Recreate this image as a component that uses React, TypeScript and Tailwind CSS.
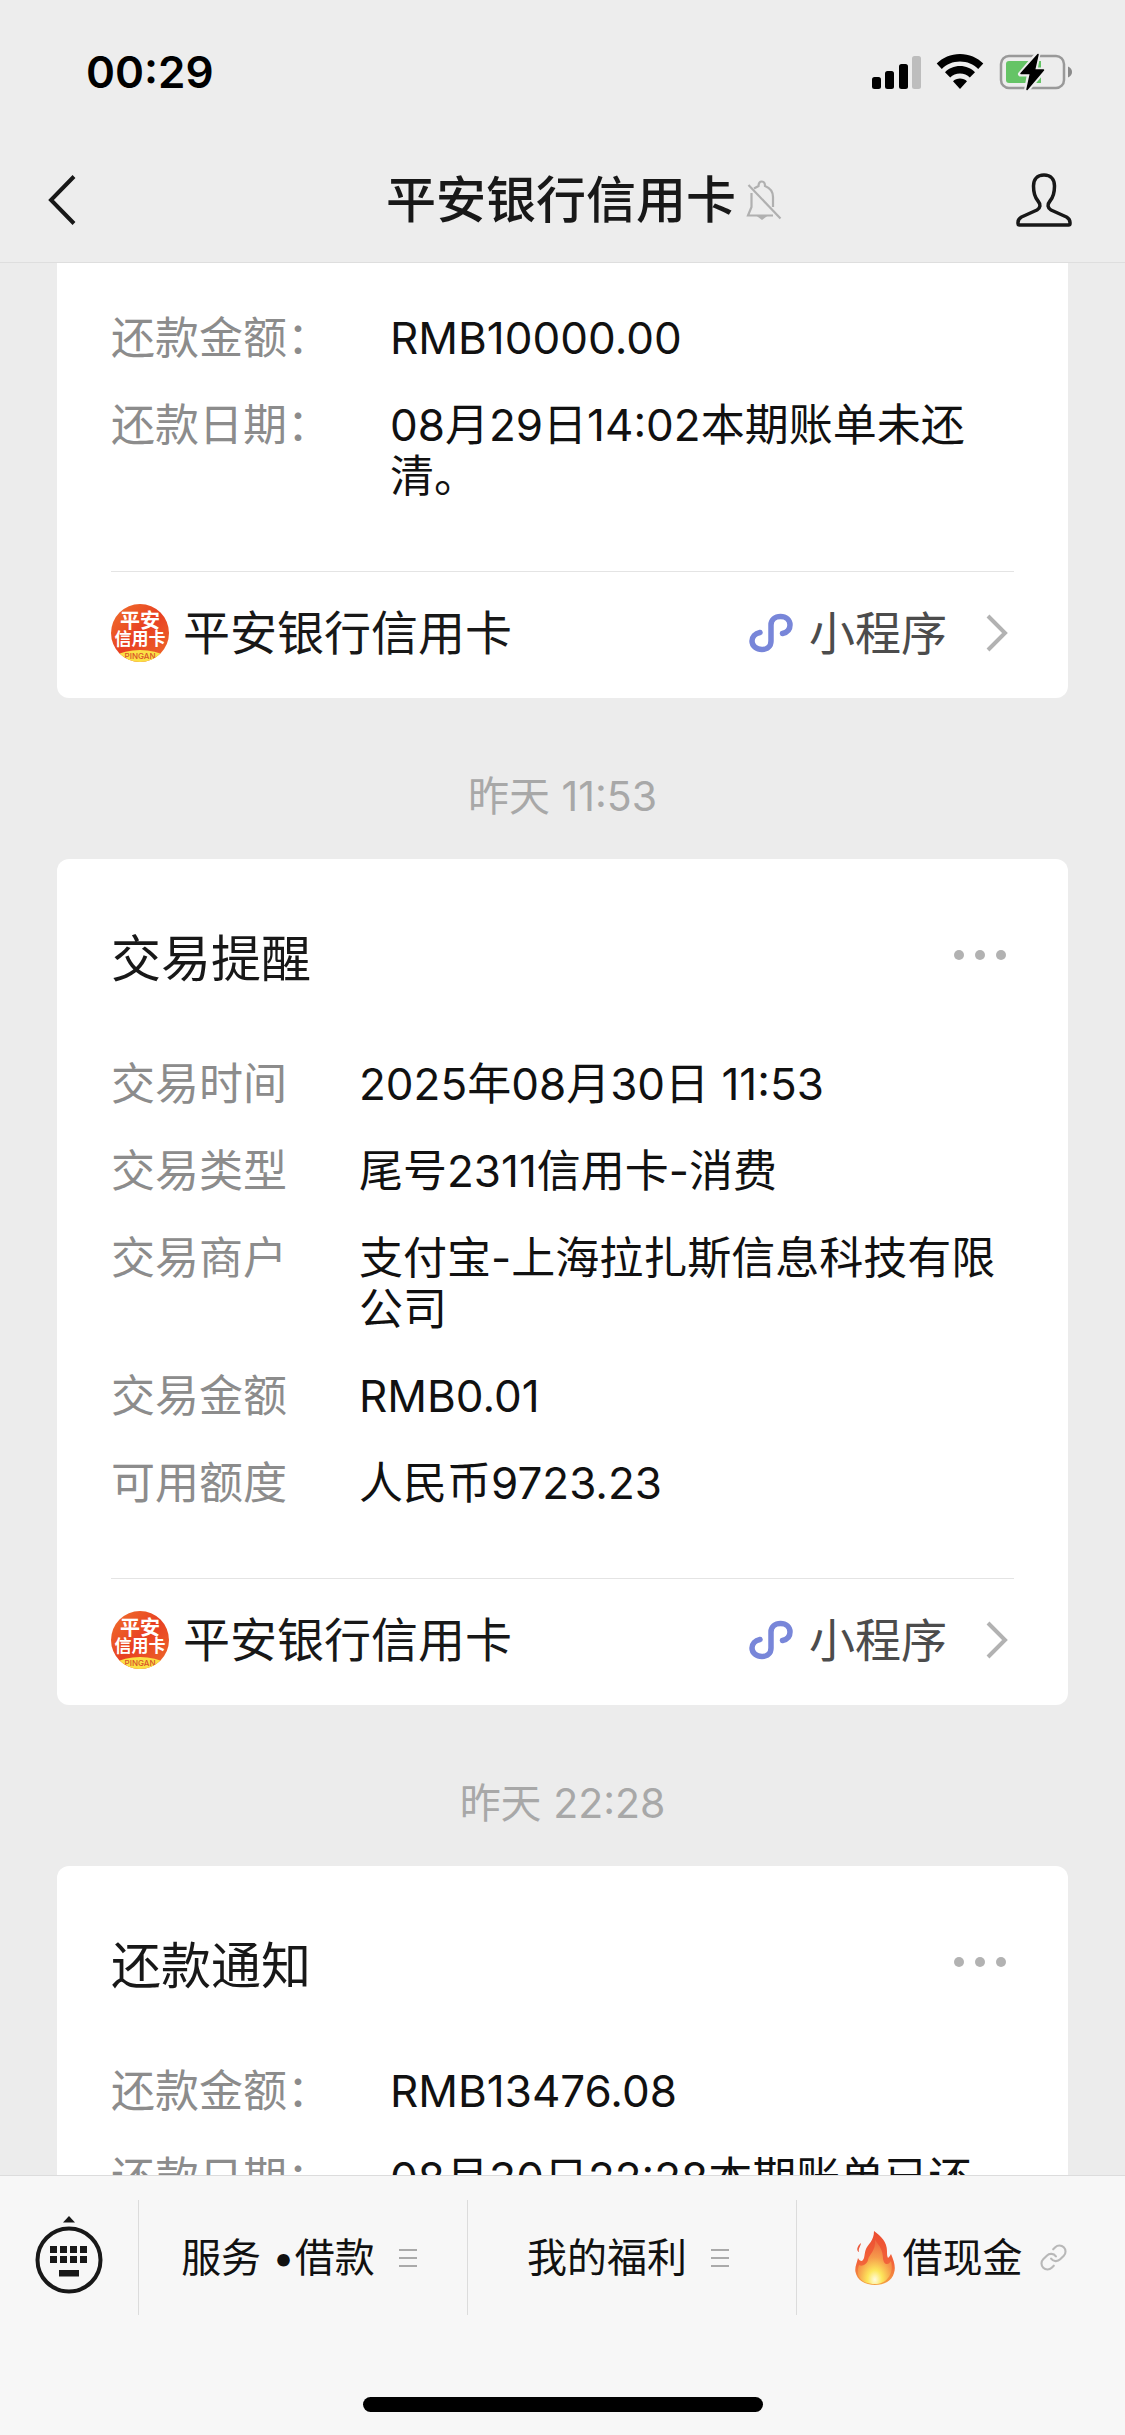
import type {ReactNode} from "react";
import {Link} from "lucide-react";

type Row = { label: string; value: string };

type Notice = {
    title?: string;
    rows: Row[];
    labelWidth: string;
    footer?: boolean;
    className?: string;
};

const repayment: Row[] = [
    {label: "还款金额：", value: "RMB10000.00"},
    {label: "还款日期：", value: "08月29日14:02本期账单未还清。"},
];

const transaction: Row[] = [
    {label: "交易时间", value: "2025年08月30日 11:53"},
    {label: "交易类型", value: "尾号2311信用卡-消费"},
    {label: "交易商户", value: "支付宝-上海拉扎斯信息科技有限公司"},
    {label: "交易金额", value: "RMB0.01"},
    {label: "可用额度", value: "人民币9723.23"},
];

const settled: Row[] = [
    {label: "还款金额：", value: "RMB13476.08"},
    {label: "还款日期：", value: "08月30日22:28本期账单已还"},
];

const SignalIcon = () => (
    <svg width="50" height="36" viewBox="0 0 50 36" aria-hidden="true">
        <rect x="1" y="23" width="9" height="12" rx="2.5"/>
        <rect x="14" y="17" width="9" height="18" rx="2.5"/>
        <rect x="28" y="10" width="9" height="25" rx="2.5"/>
        <rect x="41" y="2" width="9" height="33" rx="2.5" fill="#bdbdbd"/>
    </svg>
);

const WifiIcon = () => (
    <svg width="48" height="36" viewBox="0 0 48 36" aria-hidden="true">
        <path d="M24 0C33.200 0 41.400 3.600 47.300 9.600L42.200 15C37.500 10.300 31.100 7.600 24 7.600C16.900 7.600 10.500 10.300 5.800 15L0.700 9.600C6.600 3.600 14.800 0 24 0Z"/>
        <path d="M24 12C29.900 12 35.200 14.300 39 18.200L33.800 23.400C31.300 20.900 27.900 19.400 24 19.400C20.100 19.400 16.700 20.900 14.200 23.400L9 18.200C12.800 14.300 18.100 12 24 12Z"/>
        <path d="M24 24.500C26.800 24.500 29.200 25.500 31 27.300L24 35L17 27.300C18.800 25.500 21.200 24.500 24 24.500Z"/>
    </svg>
);

const BatteryIcon = () => (
    <svg width="74" height="38" viewBox="0 0 74 38" aria-hidden="true">
        <rect x="2" y="3" width="63" height="32" rx="8" fill="none" stroke="#999" strokeWidth="2.500"/>
        <path d="M69 13.500C71.600 14.500 73 16.500 73 19C73 21.500 71.600 23.500 69 24.500Z" fill="#8a8a8a"/>
        <path d="M10 8H42V30H10Q7 30 7 27V11Q7 8 10 8Z" fill="#65c466"/>
        <path d="M39 0.500L21.500 21H30.500L27.500 37.500L45 17H36Z" stroke="#ededed" strokeWidth="5" strokeLinejoin="round"/>
        <path d="M39 1.500L22 20.500H31.500L28 36.500L44.500 17H35.500Z" stroke="#000" strokeWidth="1.500" strokeLinejoin="round"/>
    </svg>
);

const MutedIcon = () => (
    <svg width="36" height="42" viewBox="0 0 36 42" fill="none" stroke="#b0b0b0" strokeWidth="2.200" aria-hidden="true">
        <path d="M5.500 14V28L2 36.500H27"/>
        <path d="M8 9.500L12.500 7C12.500 1 19 1 19 7C24 9 27 12.500 27 18V28"/>
        <path d="M2.500 6L34.500 39.500"/>
        <path d="M14 38H18L16 39.500Z"/>
    </svg>
);

const PersonIcon = () => (
    <svg width="56" height="54" viewBox="0 0 56 54" fill="none" stroke="#181818" strokeWidth="3.500" strokeLinejoin="round" aria-hidden="true">
        <path d="M28 2C21 2 17.500 6.500 17.500 13C17.500 20.500 18.500 24 22 28C25 31.500 24.500 35 21 37L5.500 44Q2 46 2 49.500V50.500Q2 52 3.500 52H52.500Q54 52 54 50.500V49.500Q54 46 50.500 44L35 37C31.500 35 31 31.500 34 28C37.500 24 38.500 20.500 38.500 13C38.500 6.500 35 2 28 2Z"/>
    </svg>
);

const MiniProgramIcon = () => (
    <svg width="44" height="40" viewBox="0 0 44 40" fill="none" stroke="#7886d9" strokeWidth="5.500" strokeLinecap="round" aria-hidden="true">
        <path d="M33.500 20.500C38 19.500 41 16.500 41 12C41 7 37 3.500 31.500 3.500C26 3.500 22 7 22 12V28C22 33 18.500 36.500 13 36.500C7.500 36.500 3 33 3 28C3 24 6 20.500 11 19.500"/>
    </svg>
);

const KeyboardIcon = () => (
    <svg width="68" height="80" viewBox="0 0 68 80" fill="#181818" aria-hidden="true">
        <path d="M34 0L40 6.500H28Z"/>
        <circle cx="34" cy="44" r="31.500" fill="none" stroke="#181818" strokeWidth="4"/>
        {[15, 25, 35, 45].map((x) => (
            <g key={x}>
                <rect x={x} y="30" width="7" height="7"/>
                <rect x={x} y="40" width="7" height="7"/>
            </g>
        ))}
        <rect x="24" y="54" width="20" height="6.500"/>
    </svg>
);

const MenuLinesIcon = () => (
    <svg className="mr-2" width="18" height="20" viewBox="0 0 18 20" stroke="#aaa" strokeWidth="2" aria-hidden="true">
        <path d="M0 2H18M0 10H18M0 18H18"/>
    </svg>
);

const FireIcon = () => (
    <svg width="40" height="54" viewBox="0 0 40 54" aria-hidden="true">
        <defs>
            <linearGradient id="flame" x1="0" y1="0" x2="0" y2="1">
                <stop offset="0" stopColor="#ec4c30"/>
                <stop offset="0.600" stopColor="#f2643a"/>
                <stop offset="1" stopColor="#f4a341"/>
            </linearGradient>
            <radialGradient id="glow" cx="0.500" cy="0.900" r="0.850">
                <stop offset="0" stopColor="#fffbe0"/>
                <stop offset="0.250" stopColor="#fde75c"/>
                <stop offset="0.600" stopColor="#f69a4b"/>
                <stop offset="1" stopColor="#ee6a40"/>
            </radialGradient>
        </defs>
        <path d="M19 0C26 5 32 11 32 20C32 23 32 25 33 27C34 26 35 25 36 23C39 30 41 36 39 42C37 50 29 54 20 54C10 54 2 49 0.500 41C-0.500 36 2 32 3 27C4 29 5 30 7 30C10 28 9 23 11 18C13 13 19 10 19 0Z" fill="url(#flame)"/>
        <path d="M6 12C6 15 3 17 4 21C1 20 2 15 6 12Z" fill="#ec5a3c"/>
        <path d="M20 9C25 15 28 20 28 28C29 32 30 33 32 33C34 33 35 31 36 30C38 37 36 44 33 47C30 51 25 53 20 53C13 53 7 51 4 46C2 42 3 37 4 34C7 36 12 33 13 29C14 23 21 20 20 9Z" fill="url(#glow)"/>
    </svg>
);

const BrandLogo = () => (
    <span className="relative flex size-[58px] shrink-0 flex-col items-center overflow-hidden rounded-full bg-linear-to-br from-[#f0702c] via-[#e83f22] to-[#ee6a2a] pt-2 font-bold text-white">
        <span className="text-[20px] leading-[18px]">平安</span>
        <span className="text-[17px] leading-[18px]">信用卡</span>
        <span className="absolute -bottom-8 left-1/2 h-[44px] w-[76px] -translate-x-1/2 rounded-[50%] bg-[#fbe045] text-center text-[8px] leading-[12px] font-medium text-[#d8522a]">PINGAN</span>
    </span>
);

const CardFooter = () => (
    <a href="#" className="flex h-[127px] items-center border-t border-[#e4e4e4] pb-1 text-[47px] leading-[60px]">
        <BrandLogo/>
        <span className="ml-[14px] flex-1 text-[#181818]">平安银行信用卡</span>
        <MiniProgramIcon/>
        <span className="ml-4 text-[46px] text-[#4c4c4c]">小程序</span>
        <svg className="mr-[5px] ml-[38px]" width="24" height="38" viewBox="0 0 24 38" fill="none" stroke="#b2b2b2" strokeWidth="4" aria-hidden="true">
            <path d="M3 2L20 19L3 36"/>
        </svg>
    </a>
);

const NoticeCard = ({title, rows, labelWidth, footer = true, className = "rounded-xl pt-[70px]"}: Notice) => (
    <section className={`mx-[57px] bg-white px-[54px] ${className}`}>
        {title && (
            <div className="mb-[70px] flex items-center justify-between">
                <h2 className="text-[50px] leading-[60px] text-[#181818]">{title}</h2>
                <button type="button" aria-label="更多" className="mr-2 mb-2 flex gap-[11px]">
                    <span className="size-[10px] rounded-full bg-[#b2b2b2]"/>
                    <span className="size-[10px] rounded-full bg-[#b2b2b2]"/>
                    <span className="size-[10px] rounded-full bg-[#b2b2b2]"/>
                </button>
            </div>
        )}
        <dl className="flex flex-col gap-[36px] pb-[69px] text-[44px] leading-[51px]">
            {rows.map((row) => (
                <div key={row.label} className="flex">
                    <dt className={`shrink-0 text-[#8c8c8c] ${labelWidth}`}>{row.label}</dt>
                    <dd className="text-[#111]">{row.value}</dd>
                </div>
            ))}
        </dl>
        {footer && <CardFooter/>}
    </section>
);

const TimeStamp = ({children}: { children: ReactNode }) => (
    <p className="pt-[72px] pb-[37px] text-center text-[41px] leading-[52px] text-[#a8a8a8]">{children}</p>
);

const MenuButton = ({children}: { children: ReactNode }) => (
    <button type="button" className="flex flex-1 items-center justify-center border-l border-[#dcdcdc] text-[40px] leading-[52px] text-[#111]">
        {children}
    </button>
);

const App = () => {
    return (
        <div lang="zh-CN" className="flex h-screen flex-col overflow-hidden bg-[#ececec] font-['Inter','Noto_Sans_CJK_SC',sans-serif]">
            <header className="shrink-0 border-b border-[#dedede] bg-[#ededed]">
                <div className="flex h-[137px] items-center justify-between pt-[6px] pr-[52px] pl-[86px]">
                    <time className="text-[44px] leading-[52px] font-semibold">00:29</time>
                    <div className="flex items-center gap-[15px]">
                        <SignalIcon/>
                        <WifiIcon/>
                        <BatteryIcon/>
                    </div>
                </div>
                <div className="flex h-[125px] items-center justify-between pr-[53px] pl-[48px]">
                    <button type="button" aria-label="返回" className="flex w-[56px]">
                        <svg width="28" height="50" viewBox="0 0 28 50" fill="none" stroke="#181818" strokeWidth="4" aria-hidden="true">
                            <path d="M26 1.500L3 25L26 48.500"/>
                        </svg>
                    </button>
                    <div className="flex items-center gap-[10px] pl-12">
                        <h1 className="text-[50px] leading-[60px] font-medium text-[#181818]">平安银行信用卡</h1>
                        <MutedIcon/>
                    </div>
                    <button type="button" aria-label="账号资料">
                        <PersonIcon/>
                    </button>
                </div>
            </header>

            <main className="min-h-0 flex-1 overflow-hidden">
                <NoticeCard rows={repayment} labelWidth="w-[279px]" className="rounded-b-xl pt-[50px]"/>
                <TimeStamp>昨天 11:53</TimeStamp>
                <NoticeCard title="交易提醒" rows={transaction} labelWidth="w-[248px]"/>
                <TimeStamp>昨天 22:28</TimeStamp>
                <NoticeCard title="还款通知" rows={settled} labelWidth="w-[279px]" footer={false}/>
            </main>

            <footer className="shrink-0 border-t border-[#dcdcdc] bg-[#f7f7f7]">
                <div className="flex h-[139px] pt-6">
                    <button type="button" aria-label="键盘" className="flex w-[138px] items-center justify-center pb-1">
                        <KeyboardIcon/>
                    </button>
                    <MenuButton>
                        <span className="mr-6">服务 •借款</span>
                        <MenuLinesIcon/>
                    </MenuButton>
                    <MenuButton>
                        <span className="mr-6">我的福利</span>
                        <MenuLinesIcon/>
                    </MenuButton>
                    <MenuButton>
                        <FireIcon/>
                        <span className="mr-4 ml-2">借现金</span>
                        <Link size={29} strokeWidth={1.75} color="#b8b8b8" aria-hidden="true"/>
                    </MenuButton>
                </div>
                <div className="flex justify-center pt-[82px] pb-[23px]">
                    <div className="h-[15px] w-[400px] rounded-full bg-black"/>
                </div>
            </footer>
        </div>
    );
};

export default App;
